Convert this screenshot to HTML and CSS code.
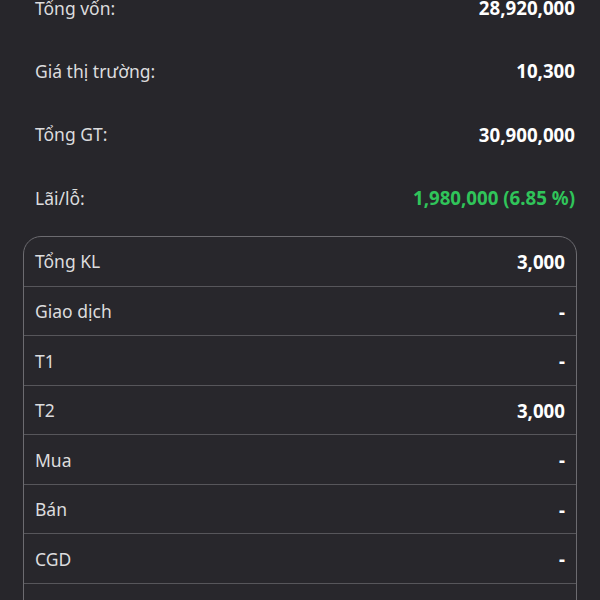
FILE: index.html
```html
<!DOCTYPE html>
<html lang="vi">
<head>
<meta charset="utf-8">
<link rel="stylesheet" href="styles.css">
</head>
<body>
<div class="page">
  <div class="summary">
    <div class="srow"><span class="label">Tổng vốn:</span><span class="value">28,920,000</span></div>
    <div class="srow"><span class="label">Giá thị trường:</span><span class="value">10,300</span></div>
    <div class="srow"><span class="label">Tổng GT:</span><span class="value">30,900,000</span></div>
    <div class="srow"><span class="label">Lãi/lỗ:</span><span class="value up">1,980,000 (6.85 %)</span></div>
  </div>
  <div class="table">
    <div class="trow"><span class="label">Tổng KL</span><span class="value">3,000</span></div>
    <div class="trow"><span class="label">Giao dịch</span><span class="value">-</span></div>
    <div class="trow"><span class="label">T1</span><span class="value">-</span></div>
    <div class="trow"><span class="label">T2</span><span class="value">3,000</span></div>
    <div class="trow"><span class="label">Mua</span><span class="value">-</span></div>
    <div class="trow"><span class="label">Bán</span><span class="value">-</span></div>
    <div class="trow"><span class="label">CGD</span><span class="value">-</span></div>
    <div class="trow"><span class="label">Phong tỏa</span><span class="value">-</span></div>
  </div>
</div>
</body>
</html>
```
FILE: styles.css
```css
html, body {
  margin: 0;
  padding: 0;
  background: #27262b;
  overflow: hidden;
}
body {
  font-family: "Noto Sans", "Open Sans", sans-serif;
  color: #e4e4e6;
}
.page {
  width: 600px;
  height: 600px;
  overflow: hidden;
}
.summary {
  margin-top: -24px;
  padding: 0 25px 0 35px;
}
.srow {
  height: 63.3px;
  display: flex;
  align-items: center;
  justify-content: space-between;
}
.label {
  font-size: 17.5px;
  color: #dcdcde;
}
.value {
  font-size: 18.7px;
  font-weight: 700;
  color: #ffffff;
}
.value.up {
  color: #30c45a;
}
.table {
  margin: 7px 23px 0 23px;
  border: 1.5px solid #6c6b70;
  border-radius: 18px;
  background: #28272c;
}
.trow {
  box-sizing: border-box;
  height: 49.55px;
  display: flex;
  align-items: center;
  justify-content: space-between;
  padding: 0 11px 0 11px;
  border-bottom: 1.5px solid #57565b;
}
```
